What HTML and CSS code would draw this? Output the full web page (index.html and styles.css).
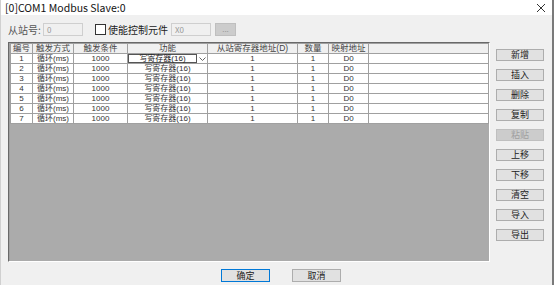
FILE: index.html
```html
<!DOCTYPE html>
<html>
<head>
<meta charset="UTF-8">
<title>Modbus Slave</title>
<link rel="stylesheet" href="styles.css">
</head>
<body>

	<div class="window">

	<div class="titlebar">
		<span class="title">[0]COM1 Modbus Slave:0</span>
		<svg class="close" width="10" height="10" viewBox="0 0 10 10"><path d="M1 1L9 9M9 1L1 9" stroke="#333" stroke-width="1"/></svg>
	</div>

	<div class="toolbar">
		<span class="lbl">从站号:</span>
		<span class="field f-station">0</span>
		<span class="chk"><span class="box"></span>使能控制元件</span>
		<span class="field f-elem">X0</span>
		<span class="btn-dots">...</span>
	</div>

	<div class="main">
		<div class="grid">
			<table id="tbl1">
				<thead>
					<tr>
						<th>编号</th>
						<th>触发方式</th>
						<th>触发条件</th>
						<th>功能</th>
						<th>从站寄存器地址(D)</th>
						<th>数量</th>
						<th>映射地址</th>
						<th></th>
					</tr>
				</thead>
				<tbody id="tbody1">
					<tr>
						<td>1</td><td>循环(ms)</td><td>1000</td>
						<td class="combo-cell"><div class="combo"><span class="combo-text">写寄存器(16)</span><span class="combo-arrow"><svg width="7" height="4" viewBox="0 0 7 4"><path d="M0.5 0.5L3.5 3.5L6.5 0.5" fill="none" stroke="#666" stroke-width="1"/></svg></span></div></td>
						<td>1</td><td>1</td><td>D0</td><td></td>
					</tr>
					<tr><td>2</td><td>循环(ms)</td><td>1000</td><td>写寄存器(16)</td><td>1</td><td>1</td><td>D0</td><td></td></tr>
					<tr><td>3</td><td>循环(ms)</td><td>1000</td><td>写寄存器(16)</td><td>1</td><td>1</td><td>D0</td><td></td></tr>
					<tr><td>4</td><td>循环(ms)</td><td>1000</td><td>写寄存器(16)</td><td>1</td><td>1</td><td>D0</td><td></td></tr>
					<tr><td>5</td><td>循环(ms)</td><td>1000</td><td>写寄存器(16)</td><td>1</td><td>1</td><td>D0</td><td></td></tr>
					<tr><td>6</td><td>循环(ms)</td><td>1000</td><td>写寄存器(16)</td><td>1</td><td>1</td><td>D0</td><td></td></tr>
					<tr><td>7</td><td>循环(ms)</td><td>1000</td><td>写寄存器(16)</td><td>1</td><td>1</td><td>D0</td><td></td></tr>
				</tbody>
			</table>
		</div>

		<div class="side">
			<span class="btn">新增</span>
			<span class="btn">插入</span>
			<span class="btn">删除</span>
			<span class="btn">复制</span>
			<span class="btn disabled">粘贴</span>
			<span class="btn">上移</span>
			<span class="btn">下移</span>
			<span class="btn">清空</span>
			<span class="btn">导入</span>
			<span class="btn">导出</span>
		</div>
	</div>

	<div class="footer">
		<span class="btn default">确定</span>
		<span class="btn">取消</span>
	</div>

	</div>

</body>
</html>
```

FILE: styles.css
```css
html, body {
	margin: 0;
	padding: 0;
}

body {
	font-family: "Noto Sans CJK SC", "Noto Sans", sans-serif;
	background: #f0f0f0;
}

.window {
	width: 554px;
	height: 285px;
	box-sizing: border-box;
	background: #f0f0f0;
	border-right: 2px solid #7a7a7a;
	border-left: 1px solid #d0d0d0;
	overflow: hidden;
}

.titlebar {
	height: 15px;
	background: #fff;
	display: flex;
	align-items: center;
	justify-content: space-between;
	padding: 0 6px 0 4px;
}

.title {
	font-size: 10.5px;
	line-height: 15px;
	color: #111;
}

.toolbar {
	display: flex;
	align-items: center;
	height: 13px;
	margin-top: 8px;
	padding-left: 7px;
	font-size: 10px;
}

.lbl {
	color: #555;
	width: 35px;
}

.field {
	box-sizing: border-box;
	height: 13px;
	border: 1px solid #cfcfcf;
	background: #f0f0f0;
	color: #999;
	font-size: 8px;
	line-height: 11px;
	padding-left: 3px;
}

.f-station {
	width: 40px;
}

.f-elem {
	width: 40px;
	margin-left: 3px;
}

.chk {
	display: flex;
	align-items: center;
	margin-left: 12px;
	color: #222;
}

.chk .box {
	width: 9px;
	height: 9px;
	border: 1px solid #333;
	background: #fff;
	margin-right: 2px;
}

.btn-dots {
	box-sizing: border-box;
	width: 21px;
	height: 13px;
	margin-left: 4px;
	background: #cccccc;
	border: 1px solid #bfbfbf;
	color: #999;
	font-size: 8px;
	line-height: 9px;
	text-align: center;
}

.main {
	display: flex;
	margin-top: 6px;
}

.grid {
	box-sizing: border-box;
	width: 482px;
	height: 220px;
	margin-left: 7px;
	background: #ababab;
	border: 1px solid;
	border-color: #696969 #fff #fff #696969;
	box-shadow: inset 1px 1px 0 #a0a0a0;
}

#tbl1 {
	border-collapse: collapse;
	table-layout: fixed;
	width: 479px;
	margin-left: 1px;
	font-family: "Liberation Sans", "Noto Sans CJK SC", sans-serif;
}

#tbl1 th, #tbl1 td {
	border: 1px solid #a0a0a0;
	padding: 0;
	height: 9px;
	line-height: 9px;
	text-align: center;
	white-space: nowrap;
	color: #333;
}

#tbl1 th {
	background: #f0f0f0;
	font-size: 8.5px;
	font-weight: normal;
	color: #444;
}

#tbl1 td {
	background: #fff;
	font-size: 8px;
}

#tbl1 th:nth-child(1) { width: 21px; }
#tbl1 th:nth-child(2) { width: 40px; }
#tbl1 th:nth-child(3) { width: 53px; }
#tbl1 th:nth-child(4) { width: 79px; }
#tbl1 th:nth-child(5) { width: 89px; }
#tbl1 th:nth-child(6) { width: 30px; }
#tbl1 th:nth-child(7) { width: 39px; }

#tbl1 td.combo-cell {
	padding: 0;
}

.combo {
	display: flex;
	height: 9px;
}

.combo-text {
	flex: 1;
	box-sizing: border-box;
	height: 9px;
	border: 1px solid #555;
	line-height: 7px;
	color: #222;
}

.combo-arrow {
	width: 10px;
	display: flex;
	align-items: center;
	justify-content: center;
}

.side {
	display: flex;
	flex-direction: column;
	gap: 8px;
	margin-left: 6px;
	padding-top: 7px;
}

.btn {
	box-sizing: border-box;
	display: block;
	width: 48px;
	height: 12px;
	background: #e1e1e1;
	border: 1px solid #adadad;
	font-size: 9px;
	line-height: 10px;
	text-align: center;
	color: #222;
}

.btn.disabled {
	background: #cccccc;
	border-color: #bfbfbf;
	color: #a0a0a0;
}

.footer {
	display: flex;
	gap: 22px;
	margin-top: 7px;
	padding-left: 220px;
}

.footer .btn {
	width: 49px;
	height: 13px;
	line-height: 11px;
}

.btn.default {
	border-color: #0078d7;
}
```
